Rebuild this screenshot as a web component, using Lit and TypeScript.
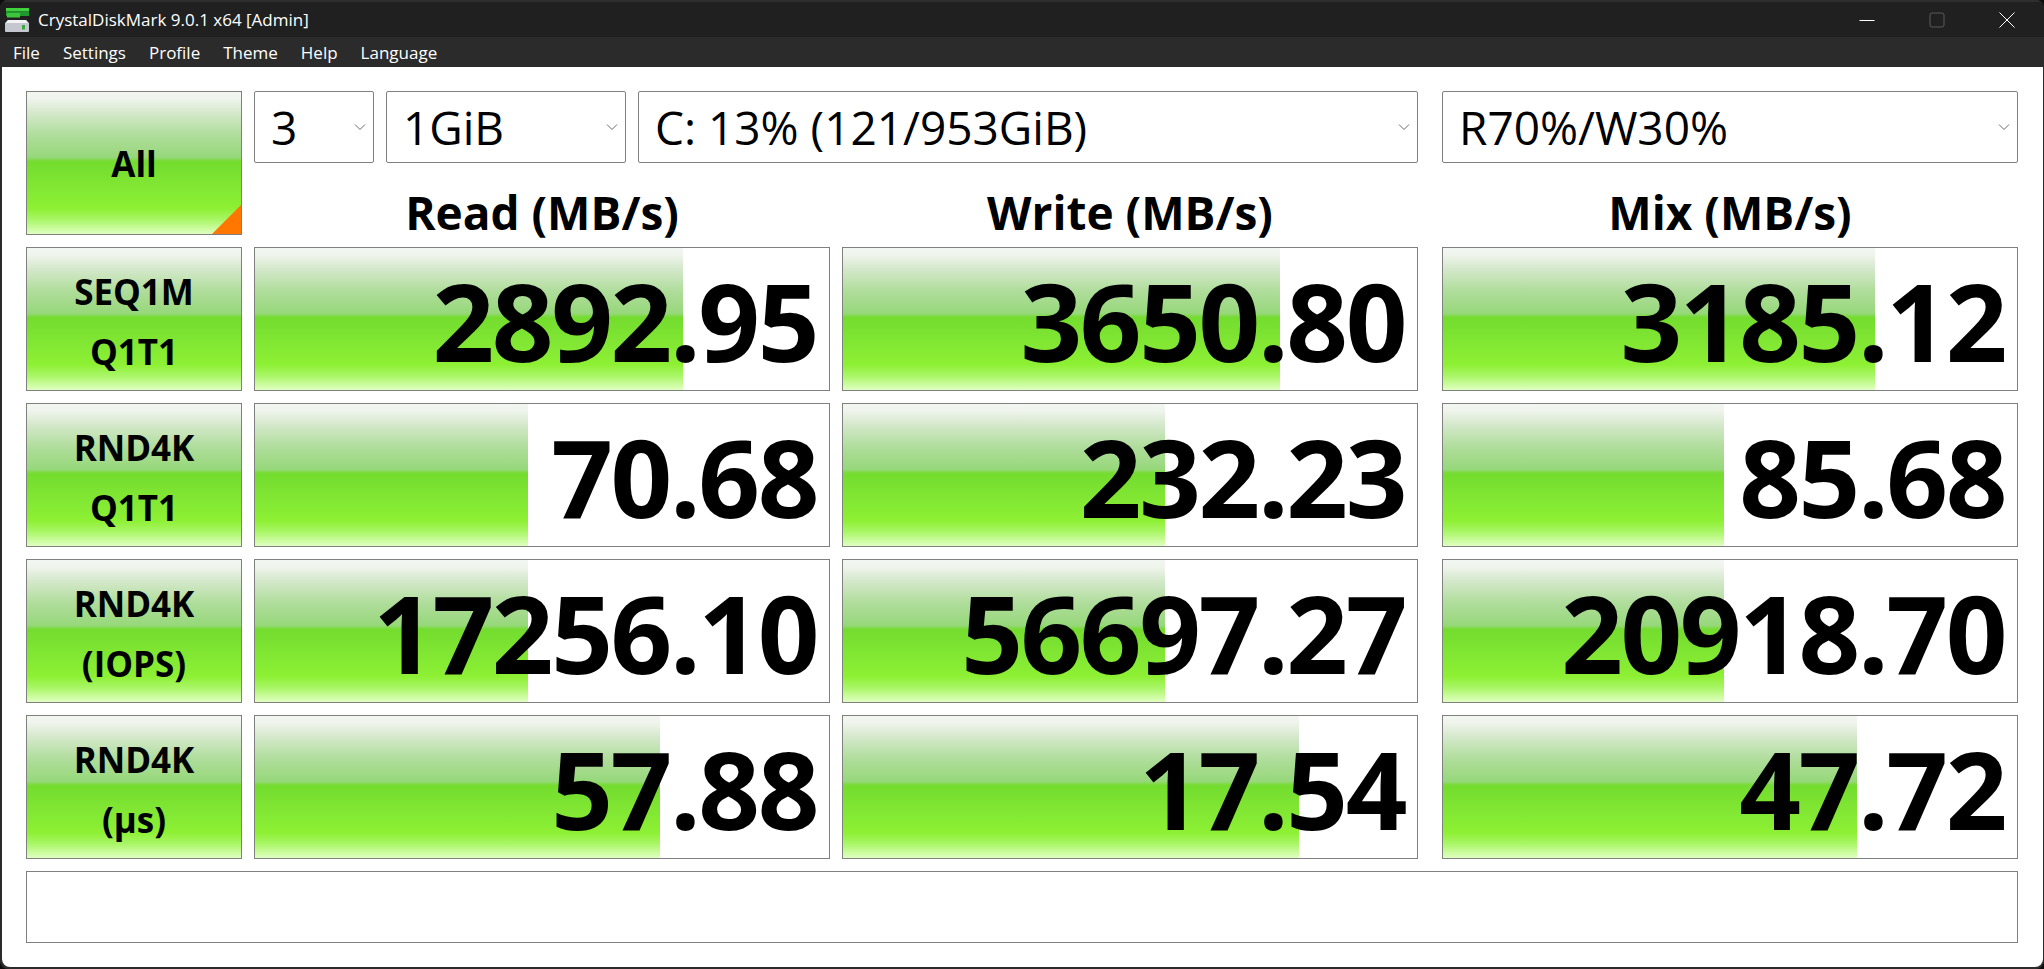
import { LitElement, html, css } from "lit";
import { customElement } from "lit/decorators.js";

const rows = [
  { l: ["SEQ1M", "Q1T1"], v: [["2892.95", 428], ["3650.80", 437], ["3185.12", 432]] },
  { l: ["RND4K", "Q1T1"], v: [["70.68", 273], ["232.23", 322], ["85.68", 281]] },
  { l: ["RND4K", "(IOPS)"], v: [["17256.10", 273], ["56697.27", 322], ["20918.70", 281]] },
  { l: ["RND4K", "(μs)"], v: [["57.88", 405], ["17.54", 456], ["47.72", 414]] },
];

@customElement("app-root")
export class AppRoot extends LitElement {
  static styles = css`
    :host { display: block; width: 2044px; height: 969px; background: #0c0c0c; font-family: "Open Sans", "Noto Sans", sans-serif; color: #000; overflow: hidden; }
    .win { height: 969px; display: flex; flex-direction: column; box-sizing: border-box; padding: 0 1px 2px 2px; background: #2b2b2b; border-radius: 8px; overflow: hidden; }
    .title { height: 37px; box-sizing: border-box; border-top: 2px solid #2e2e2e; background: #202020; display: flex; align-items: center; color: #fff; font-size: 17px; margin: 0 -1px 0 -2px; padding: 0 2px 0 5px; flex: none; }
    .title svg.logo { width: 24px; height: 24px; margin-right: 9px; margin-top: 1px; }
    .title .caps { margin-left: auto; display: flex; }
    .cap { width: 70px; height: 35px; display: flex; align-items: center; justify-content: center; }
    .menu { height: 30px; background: #2b2b2b; color: #fff; display: flex; font-size: 17px; align-items: center; gap: 23px; padding-left: 11px; flex: none; }
    .body { background: #fff; flex: 1; border-radius: 0 0 8px 8px; padding: 24px 24px 0; display: grid; grid-template-columns: 216px 576px 576px 588px; column-gap: 12px; grid-template-rows: 72px 60px repeat(4, 144px) 72px; row-gap: 12px; align-content: start; }
    .body > .mixcol { margin-left: 12px; }
    .box { border: 1px solid #808080; box-sizing: border-box; }
    .grad { background: linear-gradient(180deg, #f3f6f2 0%, #eff4ec 5%, #d6e9cd 14%, #b0dd9c 30%, #97d87b 46%, #74dc2e 49%, #80e633 65%, #8df033 82%, #a9f667 90%, #e0ffc0 100%); }
    .all { grid-row: 1 / span 2; height: 144px; position: relative; display: flex; align-items: center; justify-content: center; font-weight: 700; font-size: 35px; }
    .corner { position: absolute; right: 0; bottom: 0; width: 0; height: 0; border-left: 29px solid transparent; border-bottom: 29px solid #ff7700; }
    .sel { height: 72px; position: relative; display: flex; align-items: center; font-size: 46px; padding-left: 16px; border-radius: 2px; flex: none; }
    .sel svg { position: absolute; right: 7px; top: 31px; width: 12px; height: 8px; }
    .sel.s3 { width: 120px; }
    .sel.s1g { width: 240px; }
    .sel.drive { width: 780px; }
    .sel.mix { width: 576px; }
    .selsall { grid-column: 2 / span 3; display: flex; gap: 12px; }
    .selsall .mix { margin-left: 12px; }
    .head { font-weight: 700; font-size: 46px; display: flex; align-items: center; justify-content: center; padding-top: 14px; box-sizing: border-box; line-height: 1; }
    .cell { height: 144px; }
    .label { display: flex; flex-direction: column; align-items: center; justify-content: center; font-weight: 700; font-size: 35px; line-height: 60px; padding-top: 6px; }
    .val { position: relative; display: flex; align-items: center; justify-content: flex-end; font-weight: 700; font-size: 108px; letter-spacing: -2.4px; padding: 4px 12px 0 0; line-height: 120px; }
    .bar { position: absolute; left: 0; top: 0; bottom: 0; }
    .num { position: relative; }
    .status { grid-column: 1 / span 4; height: 72px; }
  `;

  render() {
    const chev = html`<svg viewBox="0 0 12 8"><path d="M1 1.5 L6 6.5 L11 1.5" fill="none" stroke="#6a6a6a" stroke-width="1"/></svg>`;
    return html`<div class="win">
      <div class="title">
        <svg class="logo" viewBox="0 0 24 24">
          <rect x="1" y="0" width="23" height="3.5" fill="#41d13f"/>
          <rect x="1" y="3.5" width="23" height="4.5" fill="#1e9a2e"/>
          <rect x="2" y="5" width="13" height="4.5" fill="#3cc53a"/>
          <path d="M3 12 H21 L24 15 V23 A1 1 0 0 1 23 24 H1 A1 1 0 0 1 0 23 V15 Z" fill="#c4c6d0"/>
          <path d="M3 12 H21 L23 15 H1 Z" fill="#f2f2f2"/>
          <rect x="17" y="17" width="3" height="4.5" fill="#3aa83a"/>
        </svg>
        <span>CrystalDiskMark 9.0.1 x64 [Admin]</span>
        <div class="caps">
          <div class="cap"><svg width="16" height="16" viewBox="0 0 16 16"><path d="M0.5 8.5 H15.5" stroke="#fff"/></svg></div>
          <div class="cap"><svg width="16" height="16" viewBox="0 0 16 16"><rect x="1" y="1" width="14" height="14" rx="2" fill="none" stroke="#5a5a5a"/></svg></div>
          <div class="cap"><svg width="16" height="16" viewBox="0 0 16 16"><path d="M0.5 0.5 L15.5 15.5 M15.5 0.5 L0.5 15.5" stroke="#fff"/></svg></div>
        </div>
      </div>
      <div class="menu"><span>File</span><span>Settings</span><span>Profile</span><span>Theme</span><span>Help</span><span>Language</span></div>
      <div class="body">
        <div class="box grad all">All<span class="corner"></span></div>
        <div class="selsall">
          <div class="box sel s3">3${chev}</div>
          <div class="box sel s1g">1GiB${chev}</div>
          <div class="box sel drive">C: 13% (121/953GiB)${chev}</div>
          <div class="box sel mix">R70%/W30%${chev}</div>
        </div>
        <div class="head">Read (MB/s)</div>
        <div class="head">Write (MB/s)</div>
        <div class="head mixcol">Mix (MB/s)</div>
        ${rows.map((r) => html`
          <div class="box grad cell label"><span>${r.l[0]}</span><span>${r.l[1]}</span></div>
          ${r.v.map((c, i) => html`<div class="box cell val ${i === 2 ? "mixcol" : ""}"><div class="bar grad" style="width:${c[1]}px"></div><span class="num">${c[0]}</span></div>`)}
        `)}
        <div class="box status"></div>
      </div>
    </div>`;
  }
}
